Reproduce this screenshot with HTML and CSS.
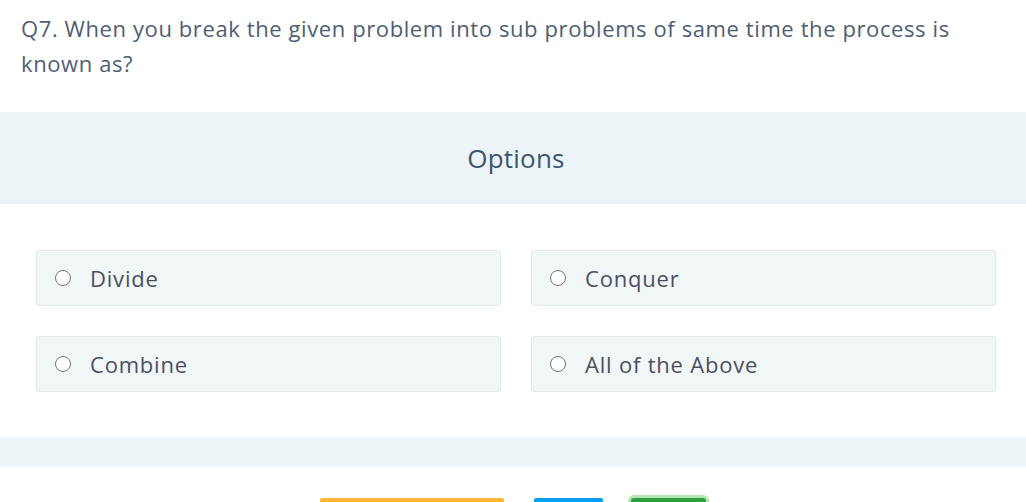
FILE: index.html
```html
<!DOCTYPE html>
<html>
<head>
<meta charset="utf-8">
<link rel="stylesheet" href="styles.css">
</head>
<body>
<div class="question">Q7. When you break the given problem into sub problems of same time the process is known as?</div>
<div class="band band-head">Options</div>
<div class="options">
  <label class="option"><span class="radio"></span><span class="opt-text">Divide</span></label>
  <label class="option"><span class="radio"></span><span class="opt-text">Conquer</span></label>
  <label class="option"><span class="radio"></span><span class="opt-text">Combine</span></label>
  <label class="option"><span class="radio"></span><span class="opt-text">All of the Above</span></label>
</div>
<div class="band band-foot"></div>
<div class="actions">
  <span class="btn btn-yellow"></span>
  <span class="btn btn-blue"></span>
  <span class="btn btn-green"></span>
</div>
</body>
</html>
```
FILE: styles.css
```css
html, body {
  margin: 0;
  padding: 0;
  background: #ffffff;
  overflow: hidden;
}
body {
  width: 1026px;
  height: 502px;
  font-family: "Open Sans", "Lato", sans-serif;
}
.question {
  padding: 11px 60px 0 21px;
  font-size: 22px;
  letter-spacing: 0.6px;
  line-height: 35px;
  color: #4e5e74;
  height: 100px;
  box-sizing: border-box;
}
.band {
  background: #ecf4f7;
}
.band-head {
  margin-top: 12px;
  height: 92px;
  display: flex;
  align-items: center;
  justify-content: center;
  padding-left: 6px;
  box-sizing: border-box;
  font-family: "Open Sans", sans-serif;
  font-size: 26px;
  letter-spacing: 0.2px;
  color: #3f546d;
}
.options {
  display: grid;
  grid-template-columns: 465px 465px;
  column-gap: 30px;
  row-gap: 30px;
  padding: 46px 0 0 36px;
}
.option {
  height: 56px;
  box-sizing: border-box;
  background: #f1f6f7;
  border: 1px solid #e2e8ea;
  border-radius: 3px;
  display: flex;
  align-items: center;
  padding-left: 18px;
}
.radio {
  display: block;
  flex: 0 0 16px;
  width: 16px;
  height: 16px;
  border: 1.5px solid #737373;
  border-radius: 50%;
  box-sizing: border-box;
  background: #fff;
  margin-right: 19px;
}
.opt-text {
  font-size: 22px;
  letter-spacing: 0.8px;
  color: #4b4f62;
  padding-bottom: 1px;
}
.band-foot {
  margin-top: 45px;
  height: 30px;
}
.actions {
  display: flex;
  align-items: flex-start;
  padding: 26px 0 0 320px;
}
.btn {
  display: block;
  height: 20px;
  border-radius: 2px;
  margin-top: 5px;
}
.btn-yellow {
  width: 184px;
  background: #fbb735;
}
.btn-blue {
  width: 69px;
  background: #03a0ef;
  margin-left: 30px;
}
.btn-green {
  width: 75px;
  background: #2f9e3f;
  margin-left: 28px;
  box-shadow: 0 0 0 3px #b2e6b5;
  border-radius: 3px;
}
```
